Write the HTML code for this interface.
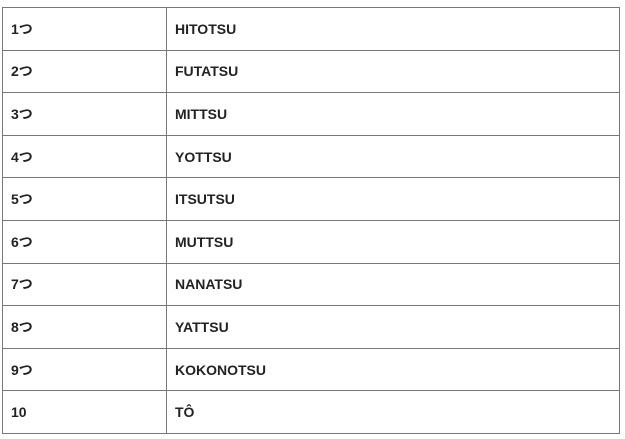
<!DOCTYPE html>
<html><head><style>
body{margin:0;background:#fff;}
table{position:absolute;left:2px;top:7px;width:618px;border-collapse:collapse;font-family:"Liberation Sans","Noto Sans CJK JP",sans-serif;font-weight:bold;font-size:14px;color:#222;}
tr{height:42.6px;}
td{border:1px solid #777;padding:0 0 0 8px;line-height:16px;vertical-align:middle;}
td:first-child{width:155px;}
td span{display:inline-block;height:16px;line-height:16px;vertical-align:top;}
</style></head><body>
<table>
<tr><td>1<span>つ</span></td><td>HITOTSU</td></tr>
<tr><td>2<span>つ</span></td><td>FUTATSU</td></tr>
<tr><td>3<span>つ</span></td><td>MITTSU</td></tr>
<tr><td>4<span>つ</span></td><td>YOTTSU</td></tr>
<tr><td>5<span>つ</span></td><td>ITSUTSU</td></tr>
<tr><td>6<span>つ</span></td><td>MUTTSU</td></tr>
<tr><td>7<span>つ</span></td><td>NANATSU</td></tr>
<tr><td>8<span>つ</span></td><td>YATTSU</td></tr>
<tr><td>9<span>つ</span></td><td>KOKONOTSU</td></tr>
<tr><td>10</td><td>TÔ</td></tr>
</table>
</body></html>
